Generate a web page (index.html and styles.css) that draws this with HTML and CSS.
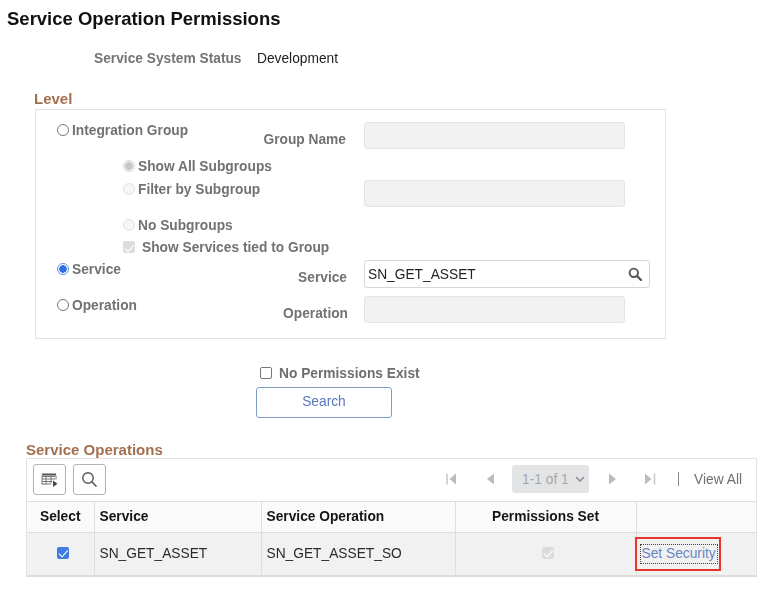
FILE: index.html
```html
<!DOCTYPE html>
<html lang="en">
<head>
<meta charset="utf-8">
<title>Service Operation Permissions</title>
<link rel="stylesheet" href="styles.css">
</head>
<body>
<h1 class="page-title">Service Operation Permissions</h1>
<div class="status"><span class="status-label">Service System Status</span><span class="status-value">Development</span></div>

<h2 class="section-title level-title">Level</h2>
<section class="level-box">
  <label class="opt opt-main row1"><input type="radio" name="level"><span>Integration Group</span></label>
  <span class="field-label row1">Group Name</span>
  <input class="field field-off row1" disabled>

  <label class="opt opt-sub row2 mt9"><input class="off-sel" type="radio" name="sub" checked disabled><span>Show All Subgroups</span></label>

  <label class="opt opt-sub row3 mt1"><input type="radio" name="sub" disabled><span>Filter by Subgroup</span></label>
  <input class="field field-off row3" disabled>

  <label class="opt opt-sub row4 mt10"><input type="radio" name="sub" disabled><span>No Subgroups</span></label>

  <label class="opt opt-sub opt-check row5 mt3"><input type="checkbox" checked disabled><span>Show Services tied to Group</span></label>

  <label class="opt opt-main row6 mt1"><input type="radio" name="level" checked><span>Service</span></label>
  <span class="field-label label-service row6">Service</span>
  <div class="field field-search row6"><span>SN_GET_ASSET</span>
    <svg class="lookup" width="14" height="14" viewBox="0 0 14 14"><circle cx="5.8" cy="5.8" r="4.2" fill="none" stroke="#555" stroke-width="1.9"/><path d="M8.9 8.9 13 13" stroke="#555" stroke-width="2.3" stroke-linecap="round"/></svg>
  </div>

  <label class="opt opt-main row8 mt1"><input type="radio" name="level"><span>Operation</span></label>
  <span class="field-label label-operation row8">Operation</span>
  <input class="field field-off row8" disabled>
</section>

<label class="no-perm"><input type="checkbox"><span>No Permissions Exist</span></label>
<button class="search-btn" type="button">Search</button>

<h2 class="section-title ops-title">Service Operations</h2>
<section class="ops-grid">
  <div class="toolbar">
    <button class="tool-btn" type="button" aria-label="Download">
      <svg width="18" height="16" viewBox="0 0 18 16"><path d="M1 1.5h14v2H1z" fill="#555"/><path d="M1 4.5h13M1 7h13M1 9.5h10M1 12h9M5 3.5v9M10 3.5v8M1 3.5v9M15 3.5v4" stroke="#777" stroke-width="1" fill="none"/><path d="M12 8.5v6.500l4.500-3.300z" fill="#444"/></svg>
    </button>
    <button class="tool-btn" type="button" aria-label="Find">
      <svg width="17" height="17" viewBox="0 0 17 17"><circle cx="7" cy="7" r="5.2" fill="none" stroke="#555" stroke-width="1.4"/><path d="M10.8 10.800l4.700 4.700" stroke="#555" stroke-width="1.6"/></svg>
    </button>
    <div class="pager">
      <svg class="pg pg-first" width="11" height="14" viewBox="0 0 11 14"><path d="M1 1.5v11" stroke="#c4c4c6" stroke-width="1.5"/><path d="M10 1.5v11L3.5 7z" fill="#bcbcbe"/></svg>
      <svg class="pg pg-prev" width="8" height="14" viewBox="0 0 8 14"><path d="M8 1.5v11L1 7z" fill="#bcbcbe"/></svg>
      <div class="pager-select"><span>1-1 of 1</span>
        <svg width="10" height="6" viewBox="0 0 10 6"><path d="M1 1l4 4 4-4" fill="none" stroke="#8e9094" stroke-width="1.6"/></svg>
      </div>
      <svg class="pg pg-next" width="8" height="14" viewBox="0 0 8 14"><path d="M0 1.5v11L7 7z" fill="#bcbcbe"/></svg>
      <svg class="pg pg-last" width="11" height="14" viewBox="0 0 11 14"><path d="M0 1.5v11L6.500 7z" fill="#bcbcbe"/><path d="M9.500 1.5v11" stroke="#c4c4c6" stroke-width="1.5"/></svg>
      <span class="pager-sep"></span>
      <span class="view-all">View All</span>
    </div>
  </div>
  <table class="ops-table">
    <colgroup><col class="c1"><col class="c2"><col class="c3"><col class="c4"><col class="c5"></colgroup>
    <thead>
      <tr><th class="center">Select</th><th>Service</th><th>Service Operation</th><th class="center">Permissions Set</th><th></th></tr>
    </thead>
    <tbody>
      <tr>
        <td><input class="sel-check" type="checkbox" checked></td>
        <td>SN_GET_ASSET</td>
        <td>SN_GET_ASSET_SO</td>
        <td><input class="perm-check" type="checkbox" checked disabled></td>
        <td class="action-cell"><a class="set-link" href="#">Set Security</a><span class="callout"></span></td>
      </tr>
    </tbody>
  </table>
</section>
</body>
</html>
```

FILE: styles.css
```css
* { box-sizing: border-box; }
html, body { margin: 0; padding: 0; }
body {
  width: 774px;
  height: 600px;
  overflow: hidden;
  background: #fff;
  font-family: "Liberation Sans", Arial, sans-serif;
  color: #222;
  font-size: 13.75px;
  filter: blur(0.4px);
}
.page-title {
  margin: 0;
  padding: 10px 0 0 7px;
  font-size: 18.5px;
  line-height: 18px;
  font-weight: 700;
  color: #111;
}
.status {
  display: flex;
  padding-left: 94px;
  margin-top: 23px;
  line-height: 16px;
}
.status-label { width: 163px; font-weight: 700; color: #747476; }
.status-value { color: #222; }
.section-title {
  margin: 0;
  font-size: 15px;
  line-height: 16px;
  font-weight: 700;
  color: #a3704f;
}
.level-title { margin: 24px 0 0 34px; }
.level-box {
  display: grid;
  width: 631px;
  height: 230px;
  margin: 2px 0 0 35px;
  padding: 12px 0 0 21px;
  border: 1px solid #e2e2e2;
  grid-template-columns: 66px 223px 18px 286px;
  grid-template-rows: 27px 31px 27px 29px 24px 28px 8px 27px;
}
.opt {
  display: flex;
  align-items: center;
  height: 16px;
  font-weight: 700;
  color: #727274;
}
.opt-main { grid-column: 1 / 3; }
.opt-sub { grid-column: 2; }
.opt span { margin-left: 3px; }
.opt-check span { margin-left: 7px; }
.row1 { grid-row: 1; }
.row2 { grid-row: 2; }
.row3 { grid-row: 3; }
.row4 { grid-row: 4; }
.row5 { grid-row: 5; }
.row6 { grid-row: 6; }
.row8 { grid-row: 8; }
.mt1 { margin-top: 1px; }
.mt3 { margin-top: 3px; }
.mt9 { margin-top: 9px; }
.mt10 { margin-top: 10px; }
.field-label {
  grid-column: 2;
  justify-self: end;
  margin-top: 10px;
  line-height: 16px;
  font-weight: 700;
  color: #727274;
}
.label-service { margin-right: -1px; }
.label-operation { margin-right: -2px; }
.field {
  grid-column: 4;
  display: block;
  margin: 0;
  padding: 0;
  border-radius: 3px;
  font: inherit;
}
.field-off {
  width: 261px;
  height: 27px;
  background: #f1f1f2;
  border: 1px solid #e4e4e5;
}
.field-search {
  display: flex;
  align-items: center;
  justify-content: space-between;
  width: 286px;
  height: 28px;
  padding: 0 7px 0 3px;
  border: 1px solid #d6d6d6;
  background: #fff;
  color: #222;
}
input[type="radio"], input[type="checkbox"] {
  appearance: none;
  -webkit-appearance: none;
  flex: none;
  width: 12px;
  height: 12px;
  margin: 0;
  background: #fff;
  border: 1px solid #777;
}
input[type="radio"] { border-radius: 50%; }
input[type="radio"]:checked {
  border-color: #5a8fe8;
  background: radial-gradient(circle, #2f6fe0 0 3.5px, #fff 4px);
}
input[type="radio"]:disabled { border-color: #e2e2e2; background: #f6f6f6; }
input.off-sel[type="radio"]:checked:disabled {
  border-color: #d8d8d8;
  background: radial-gradient(circle, #c6c6c6 0 3.5px, #efefef 4px);
}
input[type="checkbox"] { border-radius: 2px; position: relative; }
input[type="checkbox"]:checked { border: 0; background: #3f7be0; }
input[type="checkbox"]:checked::after {
  content: "";
  position: absolute;
  left: 4px;
  top: 1.5px;
  width: 4px;
  height: 7.5px;
  border: solid #fff;
  border-width: 0 1.6px 1.6px 0;
  transform: rotate(42deg);
}
input[type="checkbox"]:checked:disabled { background: #dcdcdd; }
.no-perm {
  display: flex;
  align-items: center;
  height: 16px;
  margin: 26px 0 0 260px;
  font-weight: 700;
  color: #6e6e70;
}
.no-perm span { margin-left: 7px; }
.search-btn {
  display: block;
  width: 136px;
  height: 31px;
  margin: 6px 0 0 256px;
  padding: 0 0 3px;
  background: #fff;
  border: 1px solid #7f9cc4;
  border-radius: 3px;
  font: inherit;
  color: #5878bb;
}
.ops-title { margin: 24px 0 0 26px; }
.ops-grid {
  width: 731px;
  border: 1px solid #e2e2e2;
  border-bottom: 2px solid #dcdcdc;
  margin: 0 0 0 26px;
}
.toolbar {
  display: flex;
  align-items: flex-start;
  height: 42px;
  padding: 5px 0 0 6px;
  gap: 7px;
}
.tool-btn {
  display: flex;
  align-items: center;
  justify-content: center;
  width: 33px;
  height: 31px;
  padding: 0;
  background: #fff;
  border: 1px solid #b4b4b4;
  border-radius: 3px;
}
.pager {
  display: flex;
  align-items: center;
  height: 28px;
  margin: 1px 0 0 auto;
  padding-right: 14px;
  color: #6f6f71;
}
.pg-prev { margin-left: 29px; }
.pager-select {
  display: flex;
  align-items: center;
  justify-content: space-between;
  width: 77px;
  height: 28px;
  margin-left: 18px;
  padding: 0 4px 0 10px;
  background: #e3e4e6;
  border-radius: 3px;
  color: #a6a7aa;
}
.pg-next { margin-left: 20px; }
.pg-last { margin-left: 28px; }
.pager-sep { width: 1px; height: 14px; margin: 0 15px 0 22px; background: #888; }
.ops-table {
  width: 729px;
  table-layout: fixed;
  border-collapse: collapse;
}
.c1 { width: 67px; }
.c2 { width: 167px; }
.c3 { width: 194px; }
.c4 { width: 181px; }
.c5 { width: 120px; }
.ops-table th, .ops-table td {
  padding: 0 5px 0;
  border-top: 1px solid #dedede;
  border-left: 1px solid #dedede;
  text-align: left;
}
.ops-table th:first-child, .ops-table td:first-child { border-left: 0; }
.ops-table th {
  height: 31px;
  padding-bottom: 2px;
  background: #fafafb;
  font-weight: 700;
  color: #151515;
}
.ops-table td { height: 42px; background: #f1f1f2; color: #2a2a2a; }
.ops-table .center { text-align: center; }
input.sel-check, input.perm-check { display: block; margin-bottom: 2px; }
input.sel-check { margin-left: 25px; }
input.perm-check { margin-left: 81px; }
.action-cell { position: relative; }
.set-link {
  display: inline-block;
  line-height: 18px;
  padding: 0 1px;
  margin-left: -1px;
  outline: 1px dotted #444;
  color: #6a85c2;
  text-decoration: none;
}
.callout {
  position: absolute;
  left: -2px;
  top: 4px;
  width: 86px;
  height: 34px;
  border: 2px solid #e8352a;
  pointer-events: none;
}
```
